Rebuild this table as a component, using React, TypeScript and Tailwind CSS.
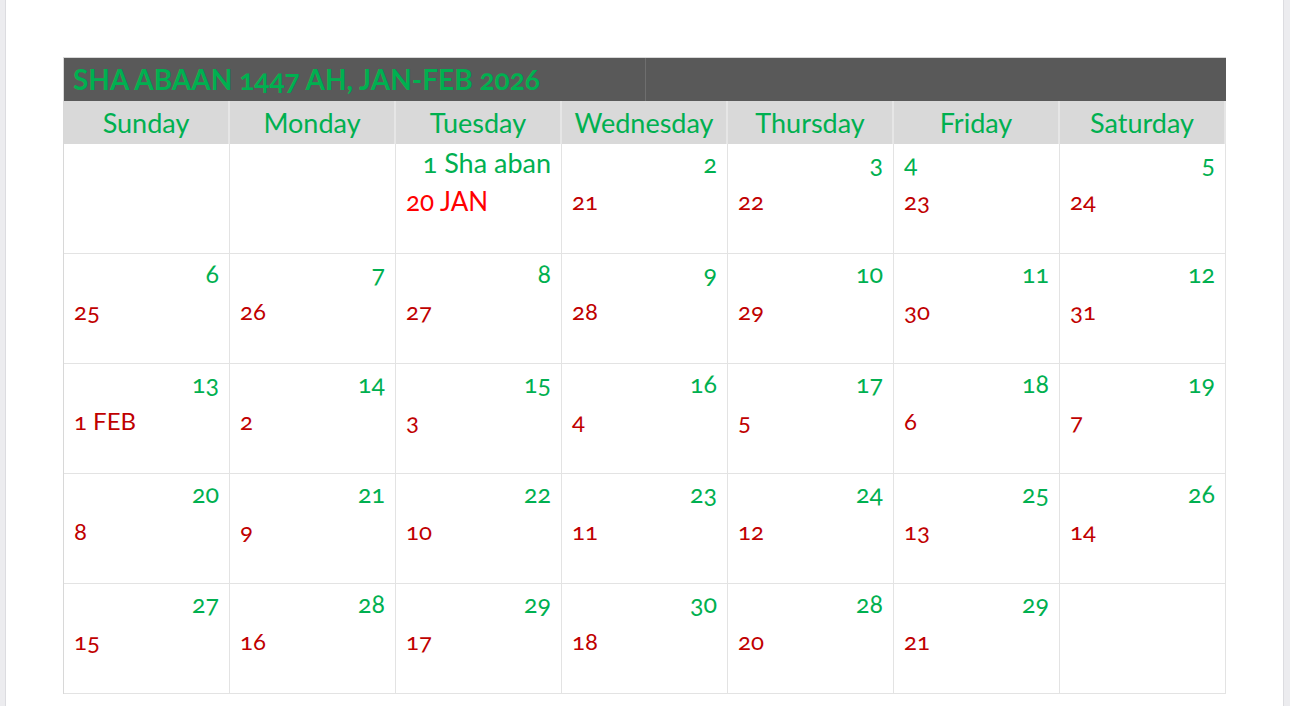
const days = ["Sunday", "Monday", "Tuesday", "Wednesday", "Thursday", "Friday", "Saturday"]

type Cell = { hijri?: string; greg?: string; left?: boolean; bright?: boolean }

const cells: Cell[] = [
  {},
  {},
  { hijri: "1 Sha aban", greg: "20 JAN", bright: true },
  { hijri: "2", greg: "21" },
  { hijri: "3", greg: "22" },
  { hijri: "4", greg: "23", left: true },
  { hijri: "5", greg: "24" },
  { hijri: "6", greg: "25" },
  { hijri: "7", greg: "26" },
  { hijri: "8", greg: "27" },
  { hijri: "9", greg: "28" },
  { hijri: "10", greg: "29" },
  { hijri: "11", greg: "30" },
  { hijri: "12", greg: "31" },
  { hijri: "13", greg: "1 FEB" },
  { hijri: "14", greg: "2" },
  { hijri: "15", greg: "3" },
  { hijri: "16", greg: "4" },
  { hijri: "17", greg: "5" },
  { hijri: "18", greg: "6" },
  { hijri: "19", greg: "7" },
  { hijri: "20", greg: "8" },
  { hijri: "21", greg: "9" },
  { hijri: "22", greg: "10" },
  { hijri: "23", greg: "11" },
  { hijri: "24", greg: "12" },
  { hijri: "25", greg: "13" },
  { hijri: "26", greg: "14" },
  { hijri: "27", greg: "15" },
  { hijri: "28", greg: "16" },
  { hijri: "29", greg: "17" },
  { hijri: "30", greg: "18" },
  { hijri: "28", greg: "20" },
  { hijri: "29", greg: "21" },
  {},
]

const DayCell = ({ cell }: { cell: Cell }) => {
  const big = cell.bright
  return (
    <div className="h-[110px] border-r border-b border-[#e3e3e3] flex flex-col px-[10px] pt-[2px]">
      <div
        className={
          "h-[34px] text-[#00b050] leading-[34px] " +
          (cell.left ? "text-left " : "text-right ") +
          (big ? "text-[27px]" : "text-[25px]")
        }
      >
        {cell.hijri}
      </div>
      <div
        className={
          "mt-[6px] leading-[30px] text-left " +
          (big ? "text-[#ff0000] text-[26px]" : "text-[#c00000] text-[24px]")
        }
      >
        {cell.greg}
      </div>
    </div>
  )
}

const App = () => {
  return (
    <div
      className="flex h-[706px] bg-white overflow-hidden"
      style={{ fontFamily: "Lato, 'Open Sans', sans-serif", fontVariantNumeric: "oldstyle-nums" }}
    >
      <div className="w-[6px] bg-[#ececef] border-r border-[#dcdce0]" />
      <div className="flex-1 pt-[57px] pl-[57px] pr-[57px]">
        <div className="w-[1163px] border-t border-l border-[#d8d8d8]">
          <div className="grid grid-cols-2 h-[43px] bg-[#595959]">
            <div className="pl-[9px] text-[28px] font-bold text-[#00b050] leading-[43px] whitespace-nowrap">
              SHA ABAAN 1447 AH, JAN-FEB 2026
            </div>
            <div className="border-l border-[#6e6e6e]" />
          </div>
          <div className="grid grid-cols-7 h-[43px] bg-[#d9d9d9]">
            {days.map((d) => (
              <div
                key={d}
                className="border-r-2 border-[#e6e6e6] text-center text-[27px] text-[#00b050] leading-[43px]"
              >
                {d}
              </div>
            ))}
          </div>
          <div className="grid grid-cols-7">
            {cells.map((c, i) => (
              <DayCell key={i} cell={c} />
            ))}
          </div>
        </div>
      </div>
      <div className="w-[7px] bg-[#ececef] border-l border-[#dcdce0]" />
    </div>
  )
}

export default App
